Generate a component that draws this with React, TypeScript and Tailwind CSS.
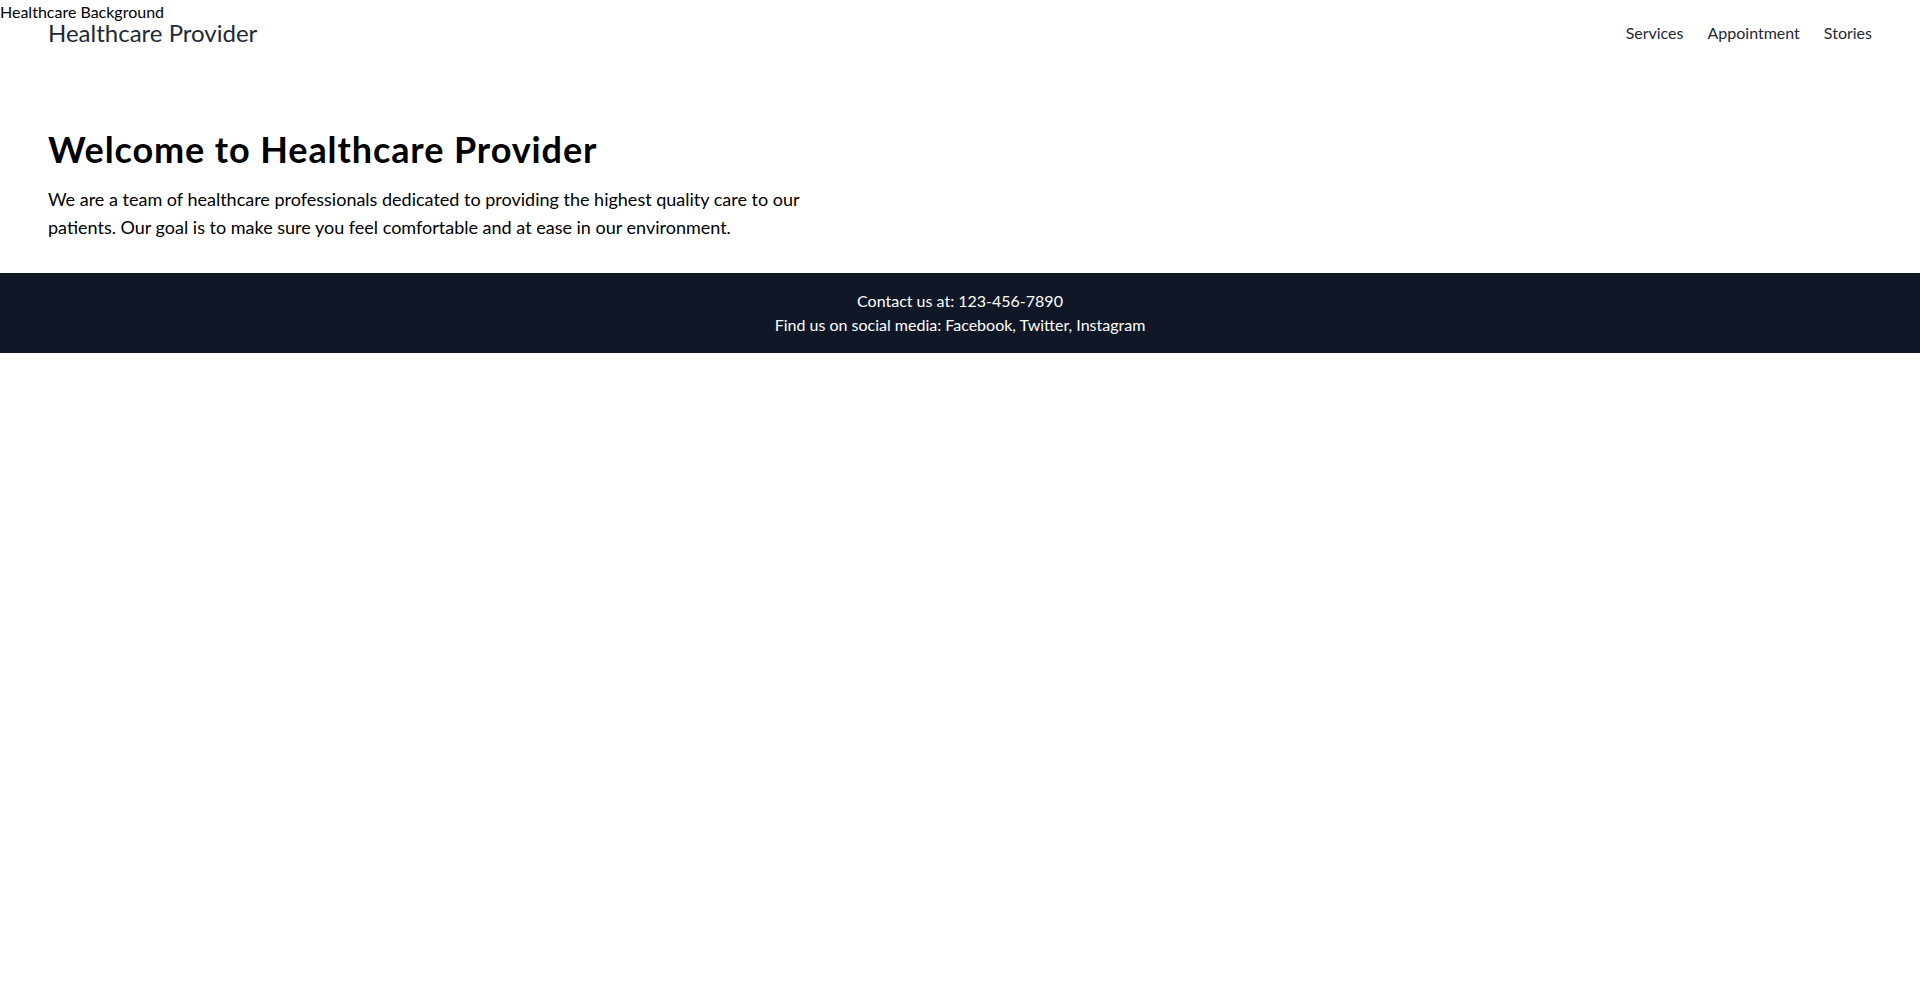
import React from "react";

const font = { fontFamily: '"Segoe UI", Lato, "Noto Sans", sans-serif' };

const navLinks = ["Services", "Appointment", "Stories"];

const Header = () => {
  return (
    <header className="flex items-center justify-between px-12 pt-[17px] pb-4">
      <h1 className="text-2xl text-gray-800">Healthcare Provider</h1>
      <nav className="flex gap-6">
        {navLinks.map((link) => (
          <a key={link} href="#" className="text-base text-gray-800">
            {link}
          </a>
        ))}
      </nav>
    </header>
  );
};

const Hero = () => {
  return (
    <section className="px-12 pt-16 pb-8">
      <h2 className="mb-4 text-4xl font-bold tracking-[0.025em] text-black">
        Welcome to Healthcare Provider
      </h2>
      <p className="max-w-3xl text-lg text-black">
        We are a team of healthcare professionals dedicated to providing the
        highest quality care to our patients. Our goal is to make sure you feel
        comfortable and at ease in our environment.
      </p>
    </section>
  );
};

const Footer = () => {
  return (
    <footer className="bg-gray-900 py-4 text-center text-base text-white">
      <p>Contact us at: 123-456-7890</p>
      <p>Find us on social media: Facebook, Twitter, Instagram</p>
    </footer>
  );
};

export default function App() {
  return (
    <div className="relative min-h-screen bg-white" style={font}>
      {/* broken background image, only the alt text shows */}
      <span className="absolute left-0 top-0 text-base leading-6 text-black">
        Healthcare Background
      </span>
      <Header />
      <Hero />
      <Footer />
    </div>
  );
}
